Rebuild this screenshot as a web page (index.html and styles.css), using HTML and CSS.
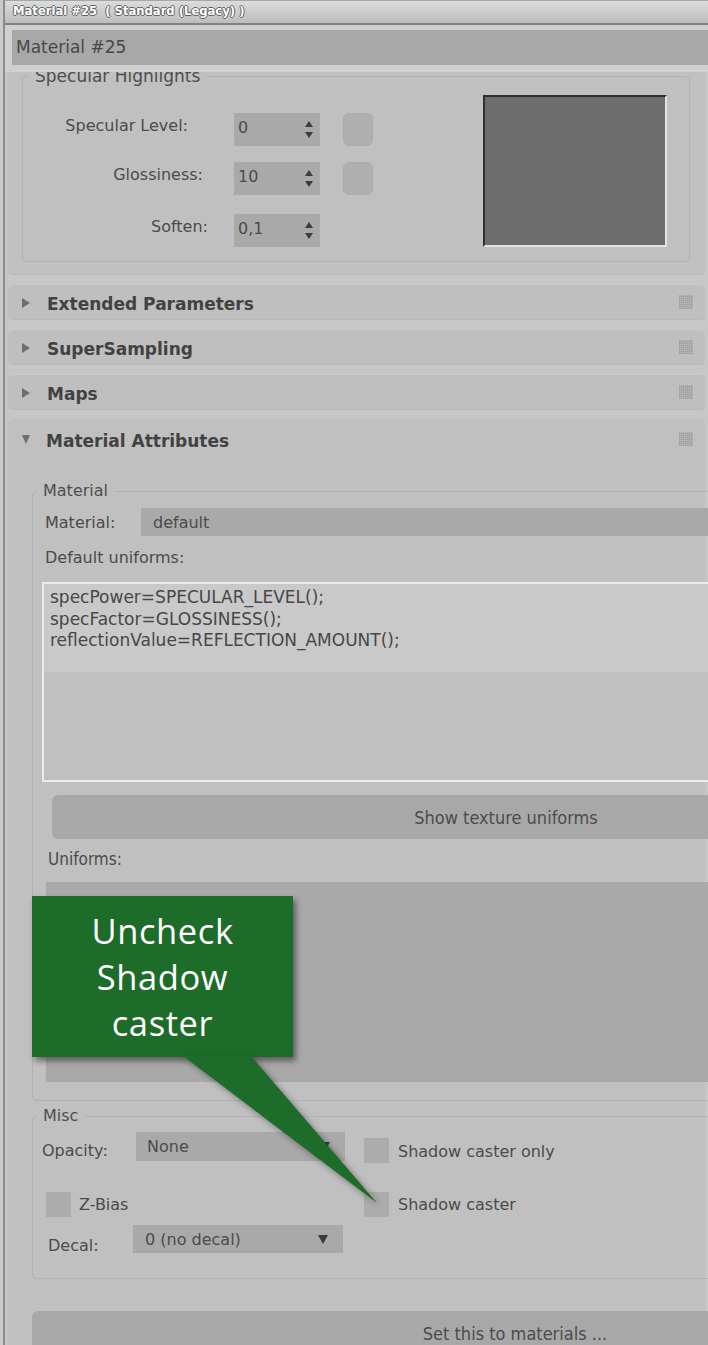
FILE: index.html
```html
<!DOCTYPE html>
<html lang="en">
<head>
    <meta charset="UTF-8">
    <title>Material #25</title>
    <link rel="stylesheet" href="styles.css">
</head>
<body>
<div class="window">
    <div class="titlebar">Material #25&nbsp; ( Standard (Legacy) )</div>
    <div class="name-strip">
        <div class="namebar">Material #25</div>
    </div>

    <div class="viewport">
        <!-- basic parameters rollout, scrolled so only its bottom shows -->
        <div class="panel panel-cut">
            <fieldset class="group spec">
                <legend>Specular Highlights</legend>
                <div class="spec-body">
                    <div class="spec-rows">
                        <div class="spin-row">
                            <span class="spin-label pad-level">Specular Level:</span>
                            <div class="spinner"><span class="value">0</span><span class="arrows"><i class="up"></i><i class="down"></i></span></div>
                            <div class="map-btn"></div>
                        </div>
                        <div class="spin-row row-gloss">
                            <span class="spin-label pad-gloss">Glossiness:</span>
                            <div class="spinner"><span class="value">10</span><span class="arrows"><i class="up"></i><i class="down"></i></span></div>
                            <div class="map-btn"></div>
                        </div>
                        <div class="spin-row row-soften">
                            <span class="spin-label pad-soften">Soften:</span>
                            <div class="spinner"><span class="value">0,1</span><span class="arrows"><i class="up"></i><i class="down"></i></span></div>
                        </div>
                    </div>
                    <div class="swatch"></div>
                </div>
            </fieldset>
        </div>

        <div class="rollout-head">
            <i class="tri-right"></i><span class="head-title">Extended Parameters</span><i class="grip"></i>
        </div>
        <div class="rollout-head">
            <i class="tri-right"></i><span class="head-title">SuperSampling</span><i class="grip"></i>
        </div>
        <div class="rollout-head">
            <i class="tri-right"></i><span class="head-title">Maps</span><i class="grip"></i>
        </div>

        <div class="panel panel-open">
            <div class="rollout-head open-head">
                <i class="tri-down"></i><span class="head-title">Material Attributes</span><i class="grip"></i>
            </div>
            <div class="rollout-body">
                <fieldset class="group wide">
                    <legend>Material</legend>
                    <div class="mat-body">
                        <div class="field-row">
                            <span class="field-label">Material:</span>
                            <div class="combo combo-long">default</div>
                        </div>
                        <div class="plain-label">Default uniforms:</div>
                        <div class="code">specPower=SPECULAR_LEVEL();
specFactor=GLOSSINESS();
reflectionValue=REFLECTION_AMOUNT();</div>
                        <div class="wide-btn texture-btn">Show texture uniforms</div>
                        <div class="plain-label narrow uniforms-label">Uniforms:</div>
                        <div class="list"></div>
                    </div>
                </fieldset>

                <fieldset class="group wide misc">
                    <legend>Misc</legend>
                    <div class="misc-body">
                        <div class="misc-row row-opacity">
                            <span class="misc-label">Opacity:</span>
                            <div class="combo combo-small">None<i class="drop"></i></div>
                            <div class="check check-top"></div>
                            <span class="check-label label-top">Shadow caster only</span>
                        </div>
                        <div class="misc-row row-bias">
                            <div class="bias-cell">
                                <div class="check"></div>
                                <span class="check-label">Z-Bias</span>
                            </div>
                            <div class="check"></div>
                            <span class="check-label">Shadow caster</span>
                        </div>
                        <div class="misc-row row-decal">
                            <span class="misc-label decal-label">Decal:</span>
                            <div class="combo combo-small decal-combo">0 (no decal)<i class="drop"></i></div>
                        </div>
                    </div>
                </fieldset>

                <div class="wide-btn set-btn">Set this to materials ...</div>
            </div>
        </div>
    </div>

    <div class="callout">
        Uncheck<br>Shadow<br>caster
        <svg class="callout-tail" width="196" height="148" viewBox="0 0 196 148">
            <polygon points="0,0 68,0 194,147" fill="#1e6c29"/>
        </svg>
    </div>
</div>
</body>
</html>
```

FILE: styles.css
```css
* {
    box-sizing: border-box;
}

body {
    margin: 0;
    width: 708px;
    height: 1345px;
    overflow: hidden;
    background: #cbcbcb;
    font-family: "DejaVu Sans", Verdana, sans-serif;
    font-size: 16px;
    color: #4b4b4b;
}

.window {
    position: relative;
    height: 1345px;
    margin-left: 3px;
    border-left: 2px solid #8d8d8d;
    background: #c6c6c6;
    overflow: hidden;
}

/* Title + name field */
.titlebar {
    height: 25px;
    border-top: 1px solid #a3a8a9;
    border-bottom: 2px solid #7b8486;
    background: linear-gradient(#dcdcdc, #bdbdbd);
    padding-left: 8px;
    font-weight: bold;
    font-size: 11.6px;
    line-height: 21px;
    color: #fff;
    white-space: nowrap;
    text-shadow: 1px 0 #5f5f5f, -1px 0 #5f5f5f, 0 1px #5f5f5f, 0 -1px #5f5f5f;
}

.name-strip {
    background: #d0d0d0;
    padding: 5px 0 7px 7px;
}

.namebar {
    height: 35px;
    background: #a8a8a8;
    padding-left: 4px;
    font-size: 17px;
    line-height: 35px;
    color: #474747;
}

.viewport {
    padding: 0 3px;
    height: 1273px;
    overflow: hidden;
    background: #c7c7c7;
}

/* Rollout panels */
.panel {
    background: #c0c0c0;
}

.panel-cut {
    border-radius: 0 0 5px 5px;
    padding: 0 15px 13px 14px;
    box-shadow: inset 0 -1px #b8b8b8;
}

.group {
    margin: 0;
    padding: 0;
    min-width: 0;
    border: 1px solid #b2b2b2;
    border-radius: 5px;
}

.group legend {
    margin-left: 4px;
    padding: 0 6px;
    font-size: 16px;
    line-height: 18px;
    color: #4e4e4e;
}

.spec {
    margin-top: -5px;
}

.spec legend {
    margin-left: 6px;
    font-size: 17px;
}

.spec-body {
    display: flex;
    padding: 10px 22px 14px 0;
}

.spec-rows {
    margin-top: 18px;
}

.spin-row {
    display: flex;
    align-items: center;
    height: 33px;
}

.row-gloss {
    margin-top: 16px;
}

.row-soften {
    margin-top: 19px;
}

.spin-label {
    width: 211px;
    text-align: right;
    margin-bottom: 9px;
}

.pad-level { padding-right: 46px; }
.pad-gloss { padding-right: 31px; }
.pad-soften { padding-right: 26px; }

.spinner {
    width: 86px;
    height: 100%;
    background: #a9a9a9;
    display: flex;
    align-items: center;
    justify-content: space-between;
    padding: 0 7px 0 4px;
}

.value {
    margin-bottom: 5px;
}

.arrows {
    display: flex;
    flex-direction: column;
    gap: 5px;
}

.arrows i {
    width: 0;
    height: 0;
    border-left: 4.5px solid transparent;
    border-right: 4.5px solid transparent;
}

.arrows .up {
    border-bottom: 6px solid #3c3c3c;
}

.arrows .down {
    border-top: 6px solid #3c3c3c;
}

.map-btn {
    width: 30px;
    height: 33px;
    margin-left: 23px;
    border-radius: 6px;
    background: #b0b0b0;
    border: 1px solid #acacac;
}

.swatch {
    margin-left: auto;
    width: 184px;
    height: 152px;
    background: #6d6d6d;
    border: 2px solid;
    border-color: #2f2f2f #e4e4e4 #e4e4e4 #2f2f2f;
}

/* Collapsed rollout headers */
.rollout-head {
    height: 36px;
    margin-top: 9px;
    border-radius: 5px;
    background: #bfbfbf;
    box-shadow: inset 0 1px #cbcbcb, inset 0 -1px #b9b9b9;
    display: flex;
    align-items: center;
    padding: 4px 0 0 14px;
}

.tri-right {
    width: 0;
    height: 0;
    border-left: 8px solid #6e6e6e;
    border-top: 5px solid transparent;
    border-bottom: 5px solid transparent;
    margin: 0 17px 3px 0;
}

.tri-down {
    width: 0;
    height: 0;
    border-top: 9px solid #6e6e6e;
    border-left: 4.5px solid transparent;
    border-right: 4.5px solid transparent;
    margin: 0 16px 3px 0;
}

.head-title {
    font-weight: bold;
    font-size: 17px;
    color: #424242;
}

.grip {
    margin: 0 12px 4px auto;
    width: 14px;
    height: 14px;
    background-color: #bababa;
    background-image:
        repeating-linear-gradient(90deg, #a6a6a6 0 1px, transparent 1px 2px),
        repeating-linear-gradient(0deg, #a6a6a6 0 1px, transparent 1px 2px);
}

/* Material Attributes */
.panel-open {
    margin-top: 9px;
    border-radius: 5px 5px 0 0;
    height: 1000px;
}

.open-head {
    margin-top: 0;
    height: 38px;
    padding-top: 6px;
    box-shadow: none;
    background: transparent;
}

.rollout-body {
    padding: 25px 0 0 24px;
}

.wide {
    width: 980px;
}

.mat-body {
    padding: 8px 0 18px 0;
}

.field-row {
    display: flex;
    align-items: center;
    height: 28px;
    padding-left: 12px;
}

.field-label {
    width: 96px;
}

.combo {
    height: 28px;
    background: #a9a9a9;
    display: flex;
    align-items: center;
    padding-left: 12px;
}

.combo-long {
    flex: 1;
}

.plain-label {
    margin-top: 12px;
    padding-left: 12px;
    line-height: 19px;
}

.narrow {
    font-family: "DejaVu Sans Condensed", "DejaVu Sans", sans-serif;
    font-stretch: condensed;
    font-size: 17px;
}

.uniforms-label {
    margin-top: 11px;
    padding-left: 15px;
}

.code {
    margin: 15px 0 0 9px;
    height: 200px;
    border: 2px solid #ececec;
    border-right-color: #d6d6d6;
    background: linear-gradient(#c9c9c9 0 88px, #c0c0c0 88px);
    padding: 3px 0 0 6px;
    font-size: 17px;
    line-height: 21.5px;
    color: #474747;
    white-space: pre;
}

.wide-btn {
    border-radius: 6px;
    background: #a8a8a8;
    text-align: center;
    font-family: "DejaVu Sans Condensed", "DejaVu Sans", sans-serif;
    font-stretch: condensed;
    font-size: 18px;
    color: #4c4c4c;
}

.texture-btn {
    margin: 13px 0 0 19px;
    width: 908px;
    height: 44px;
    line-height: 46px;
}

.list {
    margin: 13px 0 0 13px;
    height: 200px;
    background: #a9a9a9;
}

/* Misc */
.misc {
    margin-top: 6px;
}

.misc-body {
    padding: 7px 0 25px 9px;
}

.misc-row {
    display: flex;
    align-items: flex-start;
}

.row-opacity {
    height: 31px;
}

.misc-label {
    width: 94px;
    line-height: 20px;
    margin-top: 9px;
}

.combo-small {
    flex: none;
    width: 209px;
    height: 29px;
    padding-left: 11px;
}

.drop {
    margin-left: auto;
    margin-right: 15px;
    width: 0;
    height: 0;
    border-top: 9px solid #3a3a3a;
    border-left: 5.5px solid transparent;
    border-right: 5.5px solid transparent;
}

.check {
    flex: none;
    width: 25px;
    height: 25px;
    background: #acacac;
}

.check-top {
    margin: 6px 0 0 19px;
}

.check-label {
    margin-left: 9px;
    line-height: 20px;
}

.label-top {
    margin-top: 10px;
}

.row-bias {
    margin-top: 29px;
    height: 25px;
    align-items: center;
}

.bias-cell {
    width: 322px;
    display: flex;
    align-items: center;
    padding-left: 4px;
}

.bias-cell .check-label {
    margin-left: 8px;
}

.row-decal {
    margin-top: 8px;
    height: 28px;
}

.decal-label {
    width: 91px;
    padding-left: 6px;
    margin-top: 11px;
}

.decal-combo {
    height: 28px;
    width: 210px;
    padding-left: 12px;
}

.set-btn {
    margin-top: 32px;
    width: 966px;
    height: 46px;
    line-height: 46px;
}

/* Green annotation */
.callout {
    position: absolute;
    left: 27px;
    top: 896px;
    width: 261px;
    height: 161px;
    background: #1e6c29;
    box-shadow: 3px 4px 6px rgba(0, 0, 0, 0.45);
    padding-top: 12px;
    text-align: center;
    font-family: "Open Sans", sans-serif;
    font-size: 34.5px;
    line-height: 46px;
    letter-spacing: 0.6px;
    color: #fff;
}

.callout-tail {
    position: absolute;
    left: 151px;
    top: 160px;
    filter: drop-shadow(3px 3px 3px rgba(0, 0, 0, 0.4));
}
```
